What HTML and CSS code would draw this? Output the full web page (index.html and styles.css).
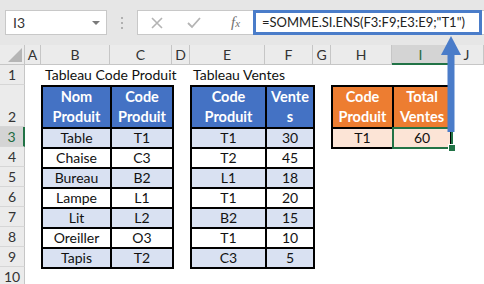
FILE: index.html
```html
<!DOCTYPE html>
<html>
<head>
<meta charset="utf-8">
<link rel="stylesheet" href="styles.css">
</head>
<body>
<div class="app">
  <div class="fbar">
    <div class="namebox"><span>I3</span><svg class="caret" width="8" height="4" viewBox="0 0 8 4"><polygon points="0,0 8,0 4,4" fill="#7a7a7a"/></svg></div>
    <div class="dots"><span></span><span></span><span></span></div>
    <div class="finput">
      <div class="icons">
        <svg width="12" height="12" viewBox="0 0 12 12"><path d="M1 1 L11 11 M11 1 L1 11" stroke="#b4b4b4" stroke-width="1.6" fill="none"/></svg>
        <svg width="14" height="12" viewBox="0 0 14 12"><path d="M1 6 L5 10 L13 1" stroke="#b4b4b4" stroke-width="1.8" fill="none"/></svg>
        <span class="fx">f<small>x</small></span>
      </div>
      <div class="formula">=SOMME.SI.ENS(F3:F9;E3:E9;"T1")</div>
    </div>
  </div>

  <div class="sheet">
    <div class="corner"><svg width="14" height="14" viewBox="0 0 14 14"><polygon points="14,0 14,14 0,14" fill="#b5b5b5"/></svg></div>
    <div class="ch">A</div>
    <div class="ch">B</div>
    <div class="ch">C</div>
    <div class="ch">D</div>
    <div class="ch">E</div>
    <div class="ch">F</div>
    <div class="ch">G</div>
    <div class="ch">H</div>
    <div class="ch sel">I</div>
    <div class="ch">J</div>

    <div class="rh r1">1</div>
    <div class="rh r2">2</div>
    <div class="rh r3 sel">3</div>
    <div class="rh r4">4</div>
    <div class="rh r5">5</div>
    <div class="rh r6">6</div>
    <div class="rh r7">7</div>
    <div class="rh r8">8</div>
    <div class="rh r9">9</div>
    <div class="rh r10">10</div>

    <div class="title t1">Tableau Code Produit</div>
    <div class="title t2">Tableau Ventes</div>

    <table class="tbl tb1">
      <colgroup><col class="w69"><col class="w62"></colgroup>
      <tr class="hd"><th>Nom<br>Produit</th><th>Code<br>Produit</th></tr>
      <tr class="alt"><td>Table</td><td>T1</td></tr>
      <tr><td>Chaise</td><td>C3</td></tr>
      <tr class="alt"><td>Bureau</td><td>B2</td></tr>
      <tr><td>Lampe</td><td>L1</td></tr>
      <tr class="alt"><td>Lit</td><td>L2</td></tr>
      <tr><td>Oreiller</td><td>O3</td></tr>
      <tr class="alt"><td>Tapis</td><td>T2</td></tr>
    </table>

    <table class="tbl tb2">
      <colgroup><col class="w75"><col class="w48"></colgroup>
      <tr class="hd"><th>Code<br>Produit</th><th>Vente<br>s</th></tr>
      <tr class="alt"><td>T1</td><td>30</td></tr>
      <tr><td>T2</td><td>45</td></tr>
      <tr class="alt"><td>L1</td><td>18</td></tr>
      <tr><td>T1</td><td>20</td></tr>
      <tr class="alt"><td>B2</td><td>15</td></tr>
      <tr><td>T1</td><td>10</td></tr>
      <tr class="alt"><td>C3</td><td>5</td></tr>
    </table>

    <table class="tbl tb3">
      <colgroup><col class="w61"><col class="w58"></colgroup>
      <tr class="hd"><th>Code<br>Produit</th><th>Total<br>Ventes</th></tr>
      <tr class="peach"><td>T1</td><td class="selcell">60</td></tr>
    </table>
  </div>

  <svg class="arrow" width="22" height="98" viewBox="0 0 22 98">
    <polygon points="11,0 21,19 1,19" fill="#4a7cc9"/>
    <rect x="7.5" y="18" width="7" height="78" fill="#4a7cc9"/>
  </svg>
</div>
</body>
</html>
```

FILE: styles.css
```css
* { box-sizing: border-box; }
body { margin: 0; font-family: Lato, "Liberation Sans", sans-serif; }
.app { position: relative; width: 484px; height: 284px; overflow: hidden; background: #fff; }

.fbar { height: 45px; background: #e6e6e6; display: flex; align-items: flex-start; padding: 10px 0 0 5px; }
.namebox { width: 102px; height: 25px; background: #fff; border: 1px solid #c8c8c8; display: flex; align-items: center; justify-content: space-between; padding: 0 6px 0 7px; font-size: 14px; color: #333; }
.dots { width: 30px; display: flex; flex-direction: column; align-items: center; gap: 3px; padding-top: 7px; }
.dots span { width: 2px; height: 2px; background: #b0b0b0; }
.finput { flex: 1; height: 25px; background: #fff; border: 1px solid #c8c8c8; border-right: none; display: flex; }
.icons { width: 115px; display: flex; align-items: center; padding-left: 13px; gap: 24px; }
.fx { font-family: "Liberation Serif", serif; font-style: italic; font-size: 15px; color: #707070; margin-left: 6px; }
.fx small { font-size: 11px; }
.formula { margin: -1px 0; width: 229px; height: 25px; border: 3px solid #4a7cc9; background: #fff; font-size: 13px; color: #222; padding-left: 6px; line-height: 19px; white-space: nowrap; overflow: hidden; }

.sheet { display: grid; grid-template-columns: 25px 16px 69px 62px 18px 75px 48px 18px 61px 58px 1fr; grid-template-rows: 20px 20px 42px repeat(8, 20px); }
.corner { background: #ebebeb; border-right: 1px solid #c6c6c6; border-bottom: 1px solid #c6c6c6; display: flex; align-items: flex-end; justify-content: flex-end; padding: 0 2px 2px 0; }
.ch { background: #ebebeb; border-right: 1px solid #c6c6c6; border-bottom: 1px solid #c6c6c6; font-size: 14px; color: #333; text-align: center; line-height: 19px; }
.ch.sel { background: #d4d4d4; color: #1e6b41; border-bottom: 2px solid #217346; }
.rh { grid-column: 1; background: #ebebeb; border-right: 1px solid #c6c6c6; border-bottom: 1px solid #d6d6d6; font-size: 14px; color: #333; text-align: center; display: flex; align-items: flex-end; justify-content: center; padding-bottom: 1px; }
.rh.sel { background: #d4d4d4; color: #1e6b41; border-right: 2px solid #217346; }

.title { grid-row: 2; font-size: 14px; color: #111; white-space: nowrap; padding-left: 4px; line-height: 20px; }
.t1 { grid-column: 3 / span 3; }
.t2 { grid-column: 6 / span 3; padding-left: 3px; }

.tbl { border-collapse: collapse; table-layout: fixed; font-size: 14px; color: #111; align-self: start; }
.tbl th, .tbl td { border: 2px solid #000; padding: 0; text-align: center; white-space: nowrap; }
.tbl td { height: 20px; line-height: 16px; }
.tbl th { height: 42px; color: #fff; font-weight: bold; line-height: 20px; vertical-align: bottom; background: #4472c4; font-size: 14.5px; }
.tbl tr.alt td { background: #d9e1f2; }
.tb1 { grid-column: 3 / 5; grid-row: 3 / 11; width: 131px; }
.tb2 { grid-column: 6 / 8; grid-row: 3 / 11; width: 123px; }
.tb3 { grid-column: 9 / 11; grid-row: 3 / 5; width: 119px; }
.tb3 th { background: #ed7d31; }
.tb3 tr.peach td { background: #fce4d6; }
.tb3 td.selcell { position: relative; }
.selcell::after { content: ""; position: absolute; left: -2px; top: -2px; right: -3px; bottom: -2px; border: 2px solid #217346; }
.selcell::before { content: ""; position: absolute; right: -6px; bottom: -5px; width: 6px; height: 6px; background: #217346; border: 1px solid #fff; z-index: 1; }
.w69 { width: 69px; } .w62 { width: 62px; } .w75 { width: 75px; } .w48 { width: 48px; } .w61 { width: 61px; } .w58 { width: 58px; }

.arrow { position: absolute; left: 440px; top: 36px; }
```
